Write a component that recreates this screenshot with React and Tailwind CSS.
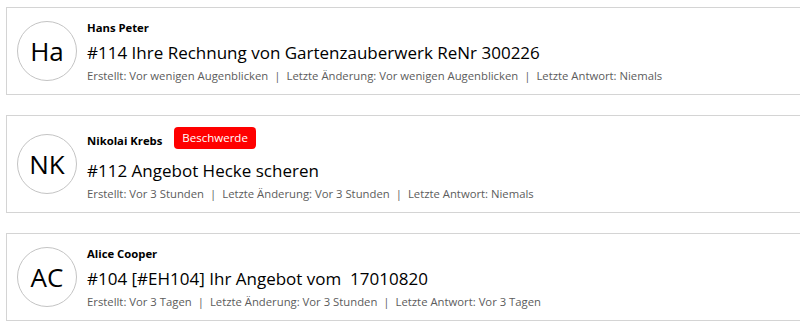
const tickets = [
  {
    initials: "Ha",
    name: "Hans Peter",
    title: "#114 Ihre Rechnung von Gartenzauberwerk ReNr 300226",
    created: "Vor wenigen Augenblicken",
    changed: "Vor wenigen Augenblicken",
    answer: "Niemals",
  },
  {
    initials: "NK",
    name: "Nikolai Krebs",
    badge: "Beschwerde",
    title: "#112 Angebot Hecke scheren",
    created: "Vor 3 Stunden",
    changed: "Vor 3 Stunden",
    answer: "Niemals",
  },
  {
    initials: "AC",
    name: "Alice Cooper",
    title: "#104 [#EH104] Ihr Angebot vom\u00a0 17010820",
    created: "Vor 3 Tagen",
    changed: "Vor 3 Stunden",
    answer: "Vor 3 Tagen",
  },
];

function TicketCard({ t }) {
  return (
    <div className="flex items-center w-[820px] border border-[#d4d4d4] bg-white px-[10px] py-[8px]">
      <div className="w-[60px] h-[60px] shrink-0 rounded-full border border-[#c4c4c4] flex items-center justify-center text-[26px] text-black">
        {t.initials}
      </div>
      <div className="ml-[10px] flex flex-col">
        <div className="flex items-center gap-[12px] min-h-[24px]">
          <span className="text-[11.3px] font-bold text-black">{t.name}</span>
          {t.badge && (
            <span className="bg-[#ff0000] text-white text-[11.5px] rounded-[4px] px-[8px] h-[22px] leading-[22px] mt-[3px] mb-[9px]">
              {t.badge}
            </span>
          )}
        </div>
        <div className="text-[17px] text-black leading-[26px]">{t.title}</div>
        <div className="text-[11.3px] text-[#5c5c5c] leading-[20px]">
          Erstellt: {t.created}
          <span className="mx-[6px]">|</span>
          Letzte Änderung: {t.changed}
          <span className="mx-[6px]">|</span>
          Letzte Antwort: {t.answer}
        </div>
      </div>
    </div>
  );
}

export default function App() {
  return (
    <div
      className="w-[800px] h-[325px] overflow-hidden bg-white pl-[6px] pt-[7px] flex flex-col gap-[20px]"
      style={{ fontFamily: "'Open Sans', 'Noto Sans', sans-serif" }}
    >
      {tickets.map((t) => (
        <TicketCard key={t.initials} t={t} />
      ))}
    </div>
  );
}
